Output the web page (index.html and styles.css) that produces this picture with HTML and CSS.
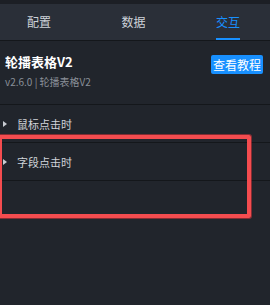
FILE: index.html
```html
<!DOCTYPE html>
<html lang="zh">
<head>
<meta charset="utf-8">
<link rel="stylesheet" href="styles.css">
</head>
<body>
<div class="panel">
  <div class="topstrip"></div>
  <nav class="tabs">
    <div class="tab">配置</div>
    <div class="tab">数据</div>
    <div class="tab active">交互</div>
  </nav>
  <header class="info">
    <div class="info-text">
      <div class="title">轮播表格V2</div>
      <div class="sub">v2.6.0 | 轮播表格V2</div>
    </div>
    <button class="doc-btn">查看教程</button>
  </header>
  <div class="row"><span class="caret"></span><span class="label">鼠标点击时</span></div>
  <div class="row"><span class="caret"></span><span class="label">字段点击时</span></div>
  <div class="highlight"></div>
</div>
</body>
</html>
```
FILE: styles.css
```css
* { box-sizing: border-box; }
html, body {
  margin: 0;
  padding: 0;
  background: #21252c;
  font-family: "Noto Sans CJK SC", "Noto Sans", sans-serif;
}
.panel {
  position: relative;
  width: 270px;
  height: 305px;
  background: #21252c;
}
.topstrip {
  height: 4px;
  background: #1c1f25;
}
.tabs {
  display: flex;
  justify-content: space-between;
  height: 37px;
  padding: 0 30px 0 27px;
  background: #2a2f38;
  border-bottom: 1px solid #14171b;
}
.tab {
  display: flex;
  align-items: center;
  height: 36px;
  font-size: 12px;
  color: #cdd2d9;
  border-bottom: 2px solid transparent;
}
.tab.active {
  color: #1890ff;
  border-bottom-color: #1890ff;
}
.info {
  display: flex;
  justify-content: space-between;
  align-items: flex-start;
  height: 64px;
  padding: 12px 7px 0 5px;
  border-bottom: 1px solid #14171b;
}
.title {
  font-size: 13px;
  line-height: 18px;
  font-weight: 700;
  color: #ffffff;
}
.sub {
  margin-top: 4px;
  font-size: 10px;
  line-height: 14px;
  color: #8a9099;
}
.doc-btn {
  margin-top: 2px;
  height: 19px;
  padding: 0 2px;
  border: 0;
  border-radius: 2px;
  background: #1890ff;
  color: #ffffff;
  font-family: inherit;
  font-size: 12px;
  line-height: 19px;
}
.row {
  display: flex;
  align-items: center;
  height: 38px;
  padding-left: 3px;
  border-bottom: 1px solid #14171b;
}
.caret {
  width: 0;
  height: 0;
  border-top: 3px solid transparent;
  border-bottom: 3px solid transparent;
  border-left: 4px solid #c9cdd3;
  margin-right: 10px;
}
.label {
  font-size: 11px;
  color: #d0d4da;
}
.highlight {
  position: absolute;
  left: -2px;
  top: 135px;
  width: 253px;
  height: 83px;
  border: 4px solid #f44c4f;
  border-radius: 2px;
  box-shadow: 0 0 0 1px rgba(200, 50, 55, 0.6);
}
```
